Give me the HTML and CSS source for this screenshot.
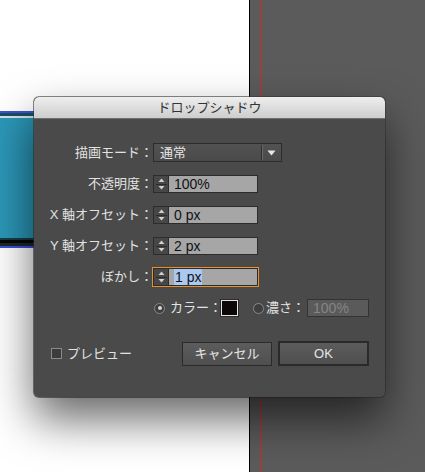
FILE: index.html
```html
<!DOCTYPE html>
<html lang="ja">
<head>
<meta charset="utf-8">
<link rel="stylesheet" href="styles.css">
</head>
<body>
<div class="canvas-left">
  <div class="bluebar"></div>
</div>
<div class="canvas-edge"></div>
<div class="canvas-right"><div class="guide"></div></div>

<div class="dialog">
  <div class="titlebar">ドロップシャドウ</div>
  <div class="dbody">
    <div class="form">
      <div class="label">描画モード：</div>
      <div class="select">
        <span class="select-text">通常</span>
        <span class="select-div"></span>
        <svg class="select-arrow" width="9" height="6" viewBox="0 0 9 6"><path d="M0.5 0.5 H8.5 L4.5 5.5Z" fill="#e8e8e8"/></svg>
      </div>

      <div class="label">不透明度：</div>
      <div class="num">
        <span class="stepper"><svg width="13" height="16" viewBox="0 0 13 16"><path d="M6.5 2.5 L9.5 6 H3.5Z" fill="#d0d0d0"/><path d="M1 8.5 H12" stroke="#2c2c2c"/><path d="M6.5 13.5 L9.5 10 H3.5Z" fill="#d0d0d0"/></svg></span>
        <span class="field">100%</span>
      </div>

      <div class="label">X 軸オフセット：</div>
      <div class="num">
        <span class="stepper"><svg width="13" height="16" viewBox="0 0 13 16"><path d="M6.5 2.5 L9.5 6 H3.5Z" fill="#d0d0d0"/><path d="M1 8.5 H12" stroke="#2c2c2c"/><path d="M6.5 13.5 L9.5 10 H3.5Z" fill="#d0d0d0"/></svg></span>
        <span class="field">0 px</span>
      </div>

      <div class="label">Y 軸オフセット：</div>
      <div class="num">
        <span class="stepper"><svg width="13" height="16" viewBox="0 0 13 16"><path d="M6.5 2.5 L9.5 6 H3.5Z" fill="#d0d0d0"/><path d="M1 8.5 H12" stroke="#2c2c2c"/><path d="M6.5 13.5 L9.5 10 H3.5Z" fill="#d0d0d0"/></svg></span>
        <span class="field">2 px</span>
      </div>

      <div class="label">ぼかし：</div>
      <div class="num focused">
        <span class="stepper"><svg width="13" height="16" viewBox="0 0 13 16"><path d="M6.5 2.5 L9.5 6 H3.5Z" fill="#d0d0d0"/><path d="M1 8.5 H12" stroke="#2c2c2c"/><path d="M6.5 13.5 L9.5 10 H3.5Z" fill="#d0d0d0"/></svg></span>
        <span class="field"><span class="sel">1 px</span></span>
      </div>

      <div class="label"></div>
      <div class="radios">
        <span class="radio on"></span>
        <span class="rlabel">カラー：</span>
        <span class="swatch"></span>
        <span class="radio"></span>
        <span class="rlabel second">濃さ：</span>
        <span class="field disabled">100%</span>
      </div>
    </div>

    <div class="footer">
      <span class="check"></span>
      <span class="clabel">プレビュー</span>
      <span class="spacer"></span>
      <span class="btn">キャンセル</span>
      <span class="btn default">OK</span>
    </div>
  </div>
</div>
</body>
</html>
```
FILE: styles.css
```css
html, body {
  margin: 0;
  padding: 0;
}
body {
  width: 425px;
  height: 472px;
  overflow: hidden;
  position: relative;
  display: flex;
  font-family: "Liberation Sans", "Noto Sans CJK JP", sans-serif;
  background: #fff;
}
.canvas-left {
  width: 249px;
  background: #ffffff;
}
.bluebar {
  margin-top: 111px;
  height: 137px;
  background:
    linear-gradient(to bottom, #3c50d8 0 2px, #184f5f 2px 5px, #d6dfe3 5px 7px, transparent 7px 127px, #163c44 127px 129px, #050707 129px 132px, #1b2729 132px 135px, #3c50d8 135px 137px),
    linear-gradient(to right, #2c97b8, #1d7896);
}
.canvas-edge {
  width: 1px;
  background: #000;
}
.canvas-right {
  flex: 1;
  background: #5b5b5b;
  display: flex;
}
.guide {
  margin-left: 11px;
  width: 1px;
  background: #d9262c;
}

.dialog {
  position: absolute;
  left: 34px;
  top: 97px;
  width: 351px;
  height: 300px;
  border-radius: 5px;
  background: #4a4a4a;
  box-shadow: 0 22px 45px rgba(0,0,0,0.6), 0 0 0 1px rgba(60,60,60,0.6);
  display: flex;
  flex-direction: column;
  overflow: hidden;
}
.titlebar {
  height: 21px;
  border-bottom: 1px solid #6e6e6e;
  background: linear-gradient(to bottom, #eeeeee, #cdcdcd);
  color: #333;
  font-size: 13px;
  line-height: 21px;
  text-align: center;
  border-radius: 5px 5px 0 0;
}
.dbody {
  flex: 1;
  display: flex;
  flex-direction: column;
  padding-top: 24px;
}
.form {
  display: grid;
  grid-template-columns: 119px auto;
  row-gap: 13px;
  align-items: center;
}
.label {
  text-align: right;
  color: #e2e2e2;
  font-size: 13px;
  line-height: 18px;
  white-space: nowrap;
}
.select {
  width: 129px;
  height: 19px;
  box-sizing: border-box;
  border: 1px solid #2c2c2c;
  background: linear-gradient(to bottom, #525252, #4a4a4a);
  display: flex;
  align-items: center;
}
.select-text {
  flex: 1;
  color: #e6e6e6;
  font-size: 13px;
  line-height: 17px;
  padding-left: 6px;
}
.select-div {
  width: 1px;
  height: 15px;
  background: #2e2e2e;
  border-right: 1px solid #6a6a6a;
}
.select-arrow {
  margin: 0 5px 0 4px;
}
.num {
  display: flex;
  width: 105px;
  height: 18px;
}
.num.focused {
  outline: 1px solid #e8912a;
}
.stepper {
  width: 15px;
  height: 18px;
  box-sizing: border-box;
  border: 1px solid #2c2c2c;
  border-right: none;
  background: #474747;
  display: flex;
  align-items: center;
  justify-content: center;
}
.stepper svg { display: block; }
.field {
  flex: 1;
  height: 18px;
  box-sizing: border-box;
  border: 1px solid #2c2c2c;
  background: #a6a6a6;
  color: #111;
  font-size: 14px;
  line-height: 16px;
  padding-left: 5px;
}
.sel {
  background: #a9c9f2;
  padding: 0 1px;
}
.radios {
  display: flex;
  align-items: center;
  height: 18px;
}
.radio {
  width: 11px;
  height: 11px;
  box-sizing: border-box;
  border-radius: 50%;
  border: 1px solid #8a8a8a;
  background: #3e3e3e;
  margin-left: 1px;
  display: flex;
  align-items: center;
  justify-content: center;
}
.radio.on::after {
  content: "";
  width: 4px;
  height: 4px;
  border-radius: 50%;
  background: #d8d8d8;
}
.rlabel {
  color: #e2e2e2;
  font-size: 13px;
  line-height: 18px;
  margin-left: 5px;
}
.rlabel.second {
  margin-left: 2px;
}
.swatch {
  width: 17px;
  height: 16px;
  box-sizing: border-box;
  border: 1px solid #e6e6e6;
  background: #0c0606;
  box-shadow: 0 0 0 1px #2a2a2a;
  margin-left: -1px;
  margin-right: 14px;
}
.field.disabled {
  flex: none;
  width: 62px;
  margin-left: 2px;
  background: #5a5a5a;
  color: #858585;
  border-color: #333;
}
.footer {
  display: flex;
  align-items: center;
  margin-top: 24px;
  padding: 0 16px 0 17px;
  height: 25px;
}
.check {
  width: 11px;
  height: 11px;
  box-sizing: border-box;
  border: 1px solid #8a8a8a;
  background: #3c3c3c;
}
.clabel {
  color: #e2e2e2;
  font-size: 13px;
  margin-left: 5px;
  line-height: 18px;
}
.spacer { flex: 1; }
.btn {
  width: 90px;
  height: 24px;
  box-sizing: border-box;
  border: 1px solid #2a2a2a;
  background: linear-gradient(to bottom, #5c5c5c, #4f4f4f);
  color: #e6e6e6;
  font-size: 13px;
  line-height: 22px;
  text-align: center;
}
.btn.default {
  width: 91px;
  height: 25px;
  margin-left: 6px;
  border: 2px solid #2a2a2a;
  line-height: 21px;
}
```
